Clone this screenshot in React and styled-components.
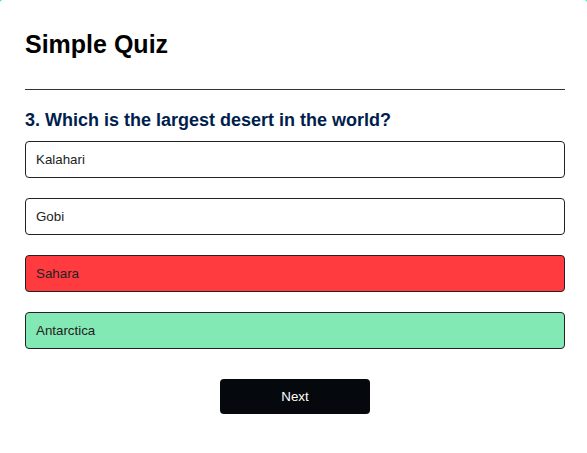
import React from "react";
import styled, { createGlobalStyle } from "styled-components";

const GlobalStyle = createGlobalStyle`
  * {
    margin: 0;
    padding: 0;
    box-sizing: border-box;
    font-family: "Liberation Sans", Arial, sans-serif;
  }
  body {
    background: #2ef0a0;
  }
`;

const Card = styled.div`
  background: #fff;
  width: 100%;
  min-height: 100vh;
  border-radius: 3px;
  padding: 30px 22px 30px 25px;
`;

const Title = styled.h1`
  font-size: 25px;
  font-weight: 700;
  color: #000;
  border-bottom: 1px solid #333;
  padding-bottom: 30px;
`;

const Quiz = styled.div`
  padding: 20px 0;
`;

const Question = styled.h2`
  font-size: 18px;
  font-weight: 700;
  color: #001e4d;
`;

const colors = {
  correct: "#82e8b4",
  incorrect: "#ff3b40",
  idle: "#fff",
};

const Answer = styled.button`
  display: inline-block;
  width: 100%;
  margin: 10px 0;
  padding: 10px;
  font-size: 13.33px;
  line-height: 15px;
  text-align: left;
  color: #222;
  background: ${(p) => colors[p.$state || "idle"]};
  border: 1px solid #222;
  border-radius: 4px;
  cursor: pointer;
`;

const NextButton = styled.button`
  display: block;
  width: 150px;
  margin: 20px auto 0;
  padding: 10px;
  font-size: 13.33px;
  line-height: 15px;
  font-weight: 500;
  color: #fff;
  background: #05080c;
  border: 0;
  border-radius: 4px;
  cursor: pointer;
`;

const answers = [
  { text: "Kalahari" },
  { text: "Gobi" },
  { text: "Sahara", state: "incorrect" },
  { text: "Antarctica", state: "correct" },
];

export default function App() {
  return (
    <>
      <GlobalStyle />
      <Card>
        <Title>Simple Quiz</Title>
        <Quiz>
          <Question>3. Which is the largest desert in the world?</Question>
          <div>
            {answers.map((a) => (
              <Answer key={a.text} $state={a.state}>
                {a.text}
              </Answer>
            ))}
          </div>
          <NextButton>Next</NextButton>
        </Quiz>
      </Card>
    </>
  );
}
